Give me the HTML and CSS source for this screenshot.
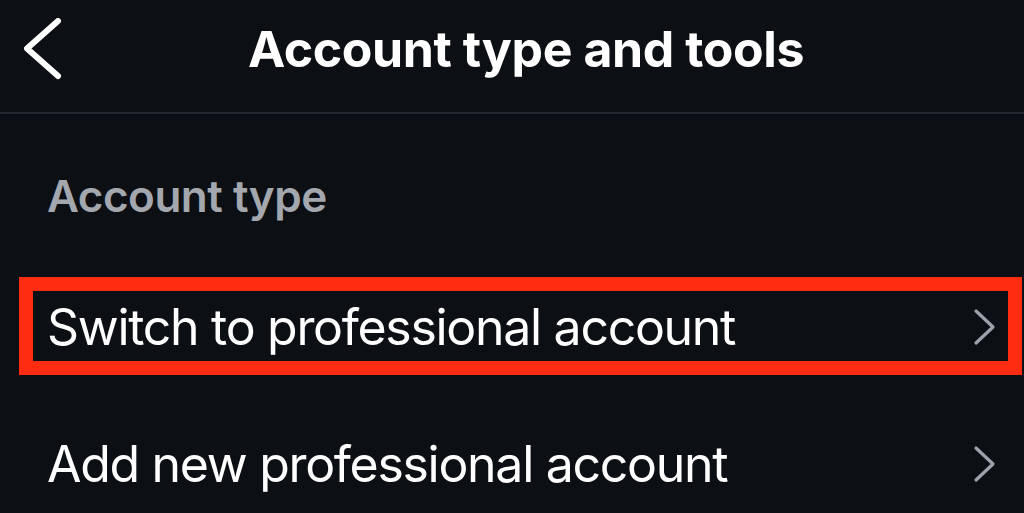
FILE: index.html
```html
<!DOCTYPE html>
<html lang="en">
<head>
<meta charset="utf-8">
<title>Account type and tools</title>
<link rel="stylesheet" href="styles.css">
</head>
<body>
<div class="screen">
  <header class="topbar">
    <button class="back" aria-label="Back">
      <svg width="40" height="62" viewBox="0 0 40 62" aria-hidden="true">
        <polyline points="34,3 3,30.5 34,58" fill="none" stroke="#ffffff" stroke-width="6" stroke-linecap="round" stroke-linejoin="round"/>
      </svg>
    </button>
    <h1 class="title">Account type and tools</h1>
    <span class="spacer"></span>
  </header>
  <section class="section">
    <h2 class="section-label">Account type</h2>
    <ul class="menu">
      <li class="menu-item highlighted">
        <span class="menu-text">Switch to professional account</span>
        <svg class="chev" width="26" height="40" viewBox="0 0 26 40" aria-hidden="true">
          <polyline points="4,3 21,19 4,35" fill="none" stroke="#9ea2a9" stroke-width="3.2" stroke-linecap="round" stroke-linejoin="round"/>
        </svg>
      </li>
      <li class="menu-item">
        <span class="menu-text">Add new professional account</span>
        <svg class="chev" width="26" height="40" viewBox="0 0 26 40" aria-hidden="true">
          <polyline points="4,3 21,19 4,35" fill="none" stroke="#9ea2a9" stroke-width="3.2" stroke-linecap="round" stroke-linejoin="round"/>
        </svg>
      </li>
    </ul>
  </section>
</div>
</body>
</html>
```

FILE: styles.css
```css
* { box-sizing: border-box; }
html, body {
  margin: 0;
  padding: 0;
  background: #0c0f14;
}
body {
  width: 1024px;
  height: 513px;
  overflow: hidden;
  font-family: Inter, "Liberation Sans", sans-serif;
  color: #ffffff;
}
.screen {
  width: 1024px;
  height: 513px;
}
.topbar {
  height: 114px;
  display: grid;
  grid-template-columns: 1fr auto 1fr;
  align-items: center;
  padding: 0 0 14px 28px;
  border-bottom: 2px solid #24272d;
}
.back {
  justify-self: start;
  background: none;
  border: 0;
  padding: 0;
  margin-left: -4px;
  display: flex;
}
.title {
  margin: 0;
  font-size: 50px;
  line-height: 52px;
  font-weight: 700;
  letter-spacing: -0.4px;
  white-space: nowrap;
}
.section {
  padding-top: 60px;
}
.section-label {
  margin: 0 0 59px 47px;
  font-size: 44px;
  line-height: 44px;
  font-weight: 600;
  letter-spacing: -0.5px;
  color: #a3a7ae;
}
.menu {
  list-style: none;
  margin: 0;
  padding: 0;
}
.menu-item {
  margin-left: 19px;
  width: 1003px;
  height: 98px;
  border: 14px solid transparent;
  display: flex;
  align-items: center;
  justify-content: space-between;
  padding: 3px 10px 0 14px;
}
.menu-item + .menu-item {
  margin-top: 39px;
}
.menu-item.highlighted {
  border-color: #ff2c12;
}
.menu-text {
  font-size: 50px;
  line-height: 51px;
  font-weight: 400;
  letter-spacing: -1.3px;
  white-space: nowrap;
}
.chev {
  display: block;
}
```
